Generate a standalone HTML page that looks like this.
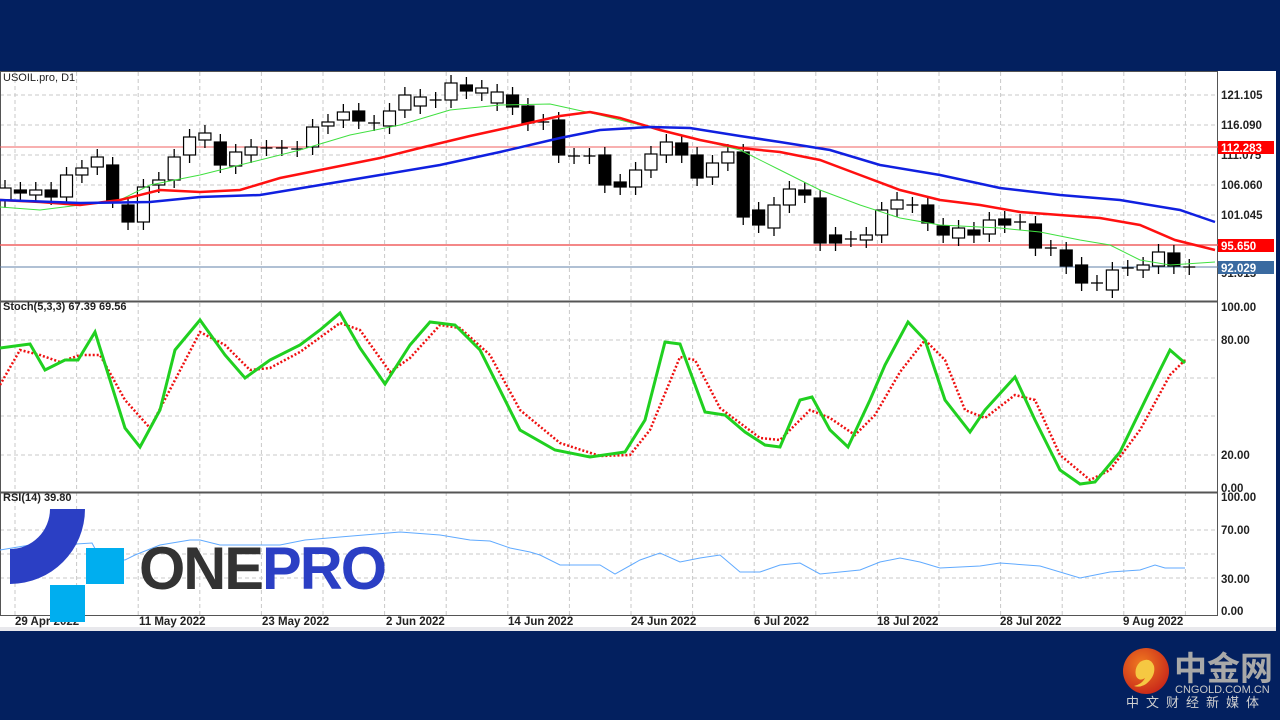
<!DOCTYPE html>
<html><head><meta charset="utf-8"><style>
body{margin:0;width:1280px;height:720px;background:#03205f;overflow:hidden;font-family:"Liberation Sans",sans-serif}
#c{position:absolute;left:0;top:0}
</style></head><body>
<svg id="c" width="1280" height="720" xmlns="http://www.w3.org/2000/svg">
<rect x="0" y="0" width="1280" height="71" fill="#03205f"/>
<rect x="0" y="71" width="1276" height="557" fill="#fff"/>
<rect x="0" y="627" width="1276" height="4" fill="#e8e8ec"/>
<g id="grid" stroke="#c8c8c8" stroke-dasharray="4,3" stroke-width="1"></g>
<g stroke="#555" fill="none" stroke-width="1">
<rect x="0.5" y="71.5" width="1217" height="544"/>
<line x1="0" y1="301.5" x2="1218" y2="301.5" stroke-width="2"/>
<line x1="0" y1="492.5" x2="1218" y2="492.5" stroke-width="2"/>
</g>
<line x1="0" y1="147" x2="1218" y2="147" stroke="#f06060"/>
<line x1="0" y1="245" x2="1218" y2="245" stroke="#f06060" stroke-width="1.5"/>
<line x1="0" y1="267" x2="1218" y2="267" stroke="#6080a8"/>
<g id="cand"></g>
<polyline id="ma3" fill="none" stroke="#40e040" stroke-width="1"/>
<polyline id="ma1" fill="none" stroke="#ff1010" stroke-width="2.5"/>
<polyline id="ma2" fill="none" stroke="#1020e0" stroke-width="2.5"/>
<polyline id="st2" fill="none" stroke="#ee1010" stroke-width="2.5" stroke-dasharray="2,2"/>
<polyline id="st1" fill="none" stroke="#20d020" stroke-width="3"/>
<polyline id="rsi" fill="none" stroke="#60aaff" stroke-width="1"/>
<g font-size="11" fill="#222">
<text x="3" y="81">USOIL.pro, D1</text>
<text x="3" y="310" font-weight="bold">Stoch(5,3,3) 67.39 69.56</text>
<text x="3" y="501" font-weight="bold">RSI(14) 39.80</text>
</g>
<g font-size="11.5" font-weight="bold" fill="#222" id="ax">
<text x="1221" y="99">121.105</text><text x="1221" y="129">116.090</text><text x="1221" y="159">111.075</text>
<text x="1221" y="189">106.060</text><text x="1221" y="219">101.045</text><text x="1221" y="277">91.015</text>
<text x="1221" y="311">100.00</text><text x="1221" y="344">80.00</text><text x="1221" y="459">20.00</text><text x="1221" y="492">0.00</text>
<text x="1221" y="501">100.00</text><text x="1221" y="534">70.00</text><text x="1221" y="583">30.00</text><text x="1221" y="615">0.00</text>
</g>
<rect x="1218" y="141" width="56" height="13" fill="#f00"/><text x="1221" y="152" font-size="11.5" font-weight="bold" fill="#fff">112.283</text>
<rect x="1218" y="239" width="56" height="13" fill="#f00"/><text x="1221" y="250" font-size="11.5" font-weight="bold" fill="#fff">95.650</text>
<rect x="1218" y="261" width="56" height="13" fill="#3a6aa0"/><text x="1221" y="272" font-size="11.5" font-weight="bold" fill="#fff">92.029</text>
<g font-size="11.5" font-weight="bold" fill="#222">
<text x="15" y="625">29 Apr 2022</text><text x="139" y="625">11 May 2022</text><text x="262" y="625">23 May 2022</text>
<text x="386" y="625">2 Jun 2022</text><text x="508" y="625">14 Jun 2022</text><text x="631" y="625">24 Jun 2022</text>
<text x="754" y="625">6 Jul 2022</text><text x="877" y="625">18 Jul 2022</text><text x="1000" y="625">28 Jul 2022</text><text x="1123" y="625">9 Aug 2022</text>
</g>
<path d="M50 509 H85 A75 75 0 0 1 10 584 V549 A40 40 0 0 0 50 509 Z" fill="#2b3fc4"/>
<rect x="86" y="548" width="38" height="36" fill="#00aeef"/>
<rect x="50" y="585" width="35" height="37" fill="#00aeef"/>
<text x="139" y="589" font-size="60" font-weight="bold" fill="#333" letter-spacing="-2" textLength="246" lengthAdjust="spacingAndGlyphs">ONE<tspan fill="#2b3fc4">PRO</tspan></text>
<defs><radialGradient id="g1" cx="40%" cy="35%" r="70%"><stop offset="0" stop-color="#f07a20"/><stop offset="1" stop-color="#c8261a"/></radialGradient></defs>
<circle cx="1146" cy="671" r="23" fill="url(#g1)"/>
<path d="M1140 662 q10 -6 14 4 q2 10 -8 18 q-6 4 -12 2 q8 -2 11 -8 q-6 4 -9 -2 q-2 -8 4 -14z" fill="#f5c842"/>
<text x="1174" y="680" font-size="33" font-weight="bold" fill="#a8a8a8" font-family="'Noto Sans CJK SC',sans-serif">中金网</text>
<text x="1175" y="693" font-size="11" fill="#c8c8c8">CNGOLD.COM.CN</text>
<text x="1126" y="707" font-size="13" fill="#d0d0d0" letter-spacing="7" font-family="'Noto Sans CJK SC',sans-serif">中文财经新媒体</text>
</svg>
<script>
var ns="http://www.w3.org/2000/svg";
function el(p,t,a){var e=document.createElementNS(ns,t);for(var k in a)e.setAttribute(k,a[k]);p.appendChild(e);return e;}
var g=document.getElementById('grid');
for(var x=15;x<1218;x+=61.6){el(g,'line',{x1:x,y1:72,x2:x,y2:615});}
[95,125,155,185,215].forEach(function(y){el(g,'line',{x1:0,y1:y,x2:1218,y2:y});});
[340,378,416,455].forEach(function(y){el(g,'line',{x1:0,y1:y,x2:1218,y2:y});});
[530,554,578].forEach(function(y){el(g,'line',{x1:0,y1:y,x2:1218,y2:y});});
var C=[['w',188,200],['b',190,193],['w',190,195],['b',190,197],['w',175,197],['w',168,175],['w',157,167],['b',165,200],['b',205,222],['w',187,222],['w',180,185],['w',157,180],['w',137,155],['w',133,140],['b',142,165],['w',152,166],['w',147,155],['c',148,148],['c',148,148],['c',149,149],['w',127,147],['w',122,126],['w',112,120],['b',111,121],['c',123,123],['w',111,126],['w',95,110],['w',97,106],['c',100,100],['w',83,100],['b',85,91],['w',88,93],['w',92,103],['b',95,107],['b',106,123],['c',122,122],['b',120,155],['c',156,156],['c',156,156],['b',155,185],['b',182,187],['w',170,187],['w',154,170],['w',142,155],['b',143,155],['b',155,178],['w',163,177],['w',152,163],['b',152,217],['b',210,225],['w',205,228],['w',189,205],['b',190,195],['b',198,243],['b',235,243],['c',239,239],['w',235,240],['w',210,235],['w',200,209],['c',205,205],['b',205,223],['b',226,235],['w',228,238],['b',230,235],['w',220,234],['b',219,225],['c',222,222],['b',224,248],['c',248,248],['b',250,266],['b',265,283],['c',283,283],['w',270,290],['c',268,268],['w',265,270],['w',252,266],['b',253,266],['c',267,267]];
var cg=document.getElementById('cand');
C.forEach(function(c,i){var x=5+i*15.38;var t=c[1],b=c[2];
el(cg,'line',{x1:x,y1:t-8,x2:x,y2:b+8,stroke:'#000','stroke-width':1.3});
if(c[0]=='c'){el(cg,'line',{x1:x-6,y1:t,x2:x+6,y2:t,stroke:'#000','stroke-width':1.3});}
else el(cg,'rect',{x:x-6,y:t,width:12,height:Math.max(b-t,2),fill:c[0]=='w'?'#fff':'#000',stroke:'#000','stroke-width':1.2});});
function P(id,s){document.getElementById(id).setAttribute('points',s);}
P('ma3',"0,207 40,210 80,205 120,200 150,185 200,175 240,165 300,150 350,135 400,125 450,110 500,105 550,104 600,115 640,125 700,140 740,150 780,170 820,190 860,205 900,218 940,225 1000,228 1040,232 1080,240 1110,245 1140,260 1170,265 1215,262");
P('ma1',"0,200 40,202 80,205 120,200 160,190 200,192 240,190 280,178 320,170 380,158 420,148 470,136 520,125 560,116 590,112 620,118 660,130 700,140 740,148 780,152 820,160 860,175 900,190 940,200 980,205 1020,212 1060,215 1100,218 1140,225 1175,240 1215,250");
P('ma2',"0,200 80,203 150,202 200,197 260,195 320,185 380,175 440,165 500,152 560,138 600,130 650,127 690,128 740,136 780,142 830,150 880,165 940,175 1000,188 1060,195 1120,200 1180,210 1215,222");
P('st1',"0,348 30,344 45,370 65,360 78,360 95,332 125,428 140,447 160,410 175,350 200,320 225,355 245,378 270,360 300,345 320,330 340,313 360,348 385,384 410,345 430,322 455,325 480,350 520,430 555,450 590,457 625,452 645,420 665,342 680,344 705,412 725,415 745,432 765,445 780,447 800,400 812,397 830,430 848,447 870,400 885,365 908,322 925,340 945,400 970,432 985,410 1015,377 1035,420 1060,470 1080,484 1095,482 1120,452 1160,370 1170,350 1185,363");
P('st2',"0,385 20,350 40,355 60,362 80,355 100,355 125,400 150,428 175,380 200,332 225,345 250,370 270,368 300,352 340,323 360,330 390,372 410,358 440,325 460,328 490,355 520,410 560,443 600,456 630,455 650,430 680,357 695,360 720,408 760,438 780,440 810,410 830,418 855,435 875,415 900,372 925,340 945,360 965,410 985,418 1015,395 1035,400 1060,455 1090,480 1110,470 1140,430 1170,375 1185,360");
P('rsi',"0,550 30,545 60,545 92,543 100,558 125,560 135,555 160,545 190,540 200,540 220,545 260,545 280,545 305,540 340,537 400,532 440,535 470,540 490,541 510,548 530,552 540,555 560,565 600,565 615,574 640,560 660,553 680,562 700,558 720,555 740,572 760,572 780,565 800,563 820,574 860,570 880,562 900,558 920,562 940,568 980,566 1000,563 1040,566 1080,578 1110,572 1140,570 1155,565 1165,568 1185,568");
</script>
</body></html>
